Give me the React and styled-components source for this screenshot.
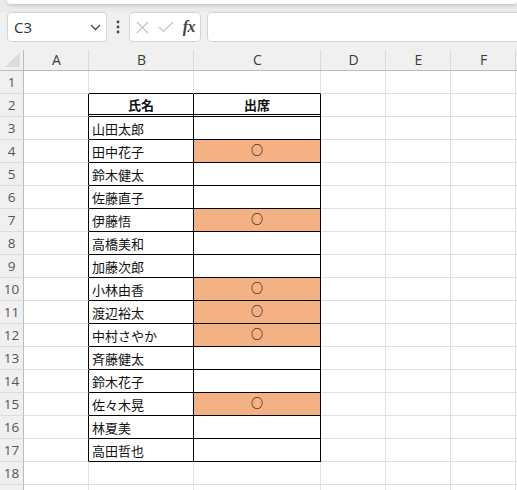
import React from "react";
import styled, { createGlobalStyle } from "styled-components";

const GlobalStyle = createGlobalStyle`
    html, body {
        margin: 0;
        padding: 0;
        background: #f0f0f0;
        overflow: hidden;
    }
    body {
        font-family: "Noto Sans CJK JP", "Noto Sans", sans-serif;
    }
`;

const Page = styled.div`
    width: 517px;
    height: 490px;
    overflow: hidden;
    background: #f0f0f0;
`;

const TopStrip = styled.div`
    height: 12px;
    background: #ebebeb;
    .ribbon {
        height: 4px;
        margin: 0 0 0 7px;
        background: #ffffff;
        border-radius: 0 0 6px 6px;
        box-shadow: 0 1px 4px rgba(0, 0, 0, 0.22);
    }
`;

const FormulaBar = styled.div`
    display: flex;
    align-items: center;
    height: 30px;
    padding-left: 7px;
`;

const Box = styled.div`
    box-sizing: border-box;
    height: 30px;
    background: #ffffff;
    border: 1px solid #d4d4d4;
    border-radius: 4px;
    display: flex;
    align-items: center;
`;

const NameBox = styled(Box)`
    width: 100px;
    padding: 0 5px 0 6px;
    justify-content: space-between;
    font-family: "Open Sans", "Liberation Sans", sans-serif;
    font-size: 15px;
    color: #333;
`;

const Dots = styled.div`
    width: 22px;
    display: flex;
    justify-content: center;
`;

const ActionBox = styled(Box)`
    width: 72px;
    padding: 0 5px 0 6px;
    justify-content: space-between;
    .fx {
        font-family: "Liberation Serif", serif;
        font-style: italic;
        font-weight: bold;
        font-size: 16px;
        color: #444;
        letter-spacing: -0.5px;
    }
`;

const FormulaInput = styled(Box)`
    flex: 1;
    margin-left: 6px;
    margin-right: -8px;
`;

const Sheet = styled.div`
    display: grid;
    grid-template-columns: 24px 65px 105px 127px 65px 65px 65px 40px;
    grid-template-rows: 29px;
    grid-auto-rows: 23px;
`;

const ColHeader = styled.div`
    box-sizing: border-box;
    position: relative;
    background: #f0f0f0;
    border-bottom: 1px solid #bcbcbc;
    display: flex;
    align-items: flex-end;
    justify-content: center;
    padding-bottom: 1px;
    font-family: "Open Sans", "Liberation Sans", sans-serif;
    font-size: 14px;
    color: #3a3a3a;
    &::after {
        content: "";
        position: absolute;
        right: 0;
        top: 8px;
        bottom: 0;
        width: 1px;
        background: ${(p) => (p.$corner ? "#bcbcbc" : "#d9d9d9")};
    }
`;

const Corner = styled.div`
    position: absolute;
    right: 4px;
    bottom: 3px;
    width: 0;
    height: 0;
    border-left: 15px solid transparent;
    border-bottom: 15px solid #dcdcdc;
`;

const RowHeader = styled.div`
    box-sizing: border-box;
    background: #f0f0f0;
    border-right: 1px solid #bcbcbc;
    border-bottom: 1px solid #dcdcdc;
    display: flex;
    align-items: center;
    justify-content: center;
    font-family: "Open Sans", "Liberation Sans", sans-serif;
    font-size: 13.5px;
    color: #555;
`;

const Cell = styled.div`
    box-sizing: border-box;
    background: ${(p) => p.$fill || "#ffffff"};
    border-right: 1px solid ${(p) => p.$right || "#e1e1e1"};
    border-bottom: ${(p) => p.$bottom || "1px solid #e1e1e1"};
    display: flex;
    align-items: center;
    justify-content: ${(p) => (p.$center ? "center" : "flex-start")};
    padding-left: ${(p) => (p.$center ? "0" : "3px")};
    font-family: "Noto Sans CJK JP", sans-serif;
    font-size: 13px;
    font-weight: ${(p) => (p.$bold ? 700 : 400)};
    color: #111;
    white-space: nowrap;
    overflow: hidden;
`;

const Mark = styled.span`
    font-family: "Noto Sans CJK JP", sans-serif;
    font-size: 12px;
    font-weight: 700;
    color: #000;
    line-height: 1;
    margin-top: -2px;
`;

const people = [
    ["山田太郎", false],
    ["田中花子", true],
    ["鈴木健太", false],
    ["佐藤直子", false],
    ["伊藤悟", true],
    ["高橋美和", false],
    ["加藤次郎", false],
    ["小林由香", true],
    ["渡辺裕太", true],
    ["中村さやか", true],
    ["斉藤健太", false],
    ["鈴木花子", false],
    ["佐々木晃", true],
    ["林夏美", false],
    ["高田哲也", false],
];

const letters = ["A", "B", "C", "D", "E", "F", ""];
const BLACK = "#000";
const ORANGE = "#f4b183";

const App = () => {
    const rows = [];
    for (let r = 1; r <= 19; r++) {
        const inTable = r >= 2 && r <= 17;
        let b = "";
        let c = null;
        let fill;
        let bold = false;
        let tableBottom;
        if (r === 2) {
            b = "氏名";
            c = "出席";
            bold = true;
            tableBottom = `3px double ${BLACK}`;
        } else if (inTable) {
            const [name, here] = people[r - 3];
            b = name;
            c = here ? <Mark>○</Mark> : null;
            fill = here ? ORANGE : undefined;
            tableBottom = `1px solid ${BLACK}`;
        } else if (r === 1) {
            tableBottom = `1px solid ${BLACK}`;
        }
        rows.push(
            <React.Fragment key={r}>
                {/* row 19 is only a sliver at the bottom edge, its number is hidden */}
                <RowHeader>{r < 19 ? r : ""}</RowHeader>
                <Cell $right={inTable ? BLACK : undefined} />
                <Cell
                    $right={inTable ? BLACK : undefined}
                    $bottom={tableBottom}
                    $bold={bold}
                    $center={bold}
                >
                    {b}
                </Cell>
                <Cell
                    $right={inTable ? BLACK : undefined}
                    $bottom={tableBottom}
                    $bold={bold}
                    $center
                    $fill={fill}
                >
                    {c}
                </Cell>
                <Cell />
                <Cell />
                <Cell />
                <Cell />
            </React.Fragment>
        );
    }

    return (
        <Page>
            <GlobalStyle />
            <TopStrip>
                <div className="ribbon" />
            </TopStrip>
            <FormulaBar>
                <NameBox>
                    <span>C3</span>
                    <svg width="11" height="7" viewBox="0 0 11 7">
                        <path d="M1 1 L5.5 5.5 L10 1" fill="none" stroke="#444" strokeWidth="1.3" />
                    </svg>
                </NameBox>
                <Dots>
                    <svg width="4" height="14" viewBox="0 0 4 14">
                        <circle cx="2" cy="2" r="1.4" fill="#444" />
                        <circle cx="2" cy="7" r="1.4" fill="#444" />
                        <circle cx="2" cy="12" r="1.4" fill="#444" />
                    </svg>
                </Dots>
                <ActionBox>
                    <svg width="13" height="13" viewBox="0 0 13 13">
                        <path d="M1 1 L12 12 M12 1 L1 12" stroke="#c4c4c4" strokeWidth="1.2" />
                    </svg>
                    <svg width="16" height="12" viewBox="0 0 16 12">
                        <path d="M1 6 L5.5 10.5 L15 1" fill="none" stroke="#c4c4c4" strokeWidth="1.2" />
                    </svg>
                    <span className="fx">fx</span>
                </ActionBox>
                <FormulaInput />
            </FormulaBar>
            <Sheet>
                <ColHeader $corner>
                    <Corner />
                </ColHeader>
                {letters.map((l, i) => (
                    <ColHeader key={i}>{l}</ColHeader>
                ))}
                {rows}
            </Sheet>
        </Page>
    );
};

export default App;
